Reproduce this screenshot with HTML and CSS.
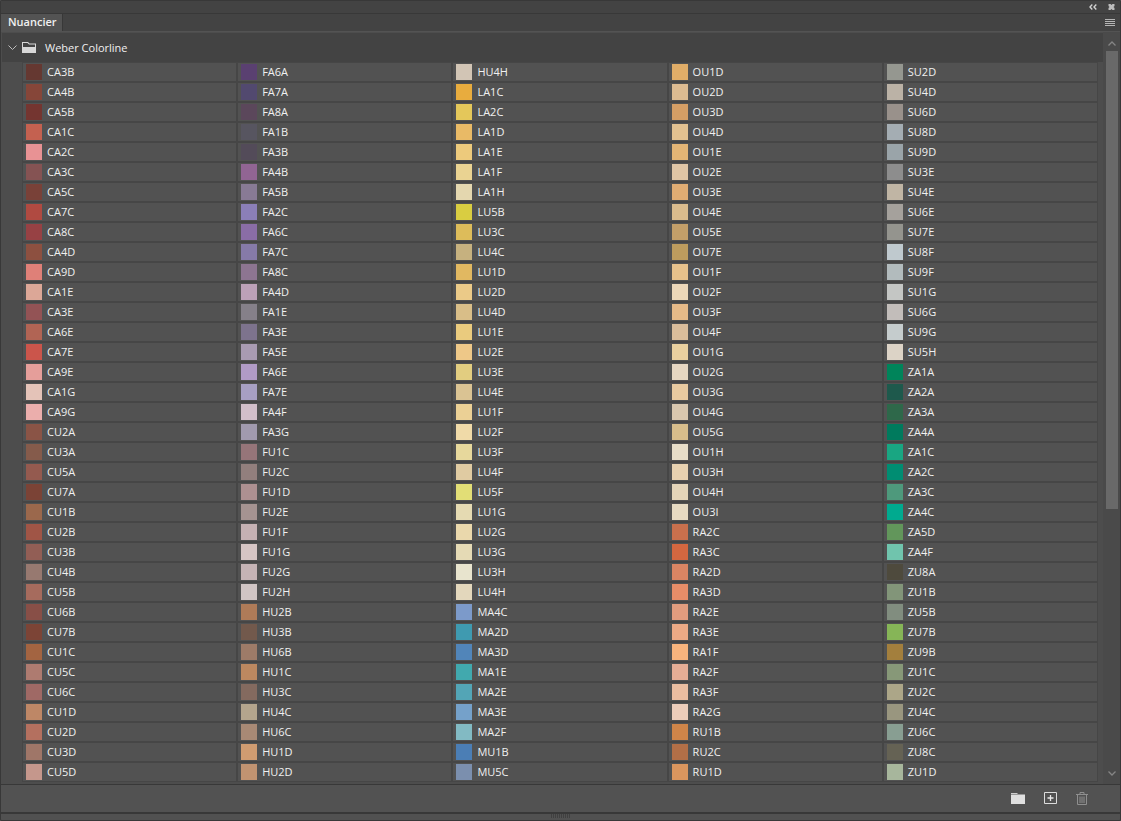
FILE: index.html
```html
<!DOCTYPE html>
<html lang="fr">
<head>
    <meta charset="UTF-8">
    <meta name="viewport" content="width=device-width, initial-scale=1.0">
    <title>Nuancier</title>
    <link rel="stylesheet" href="styles.css">
</head>
<body>
    <div class="panel">
        <header class="titlebar">
            <button class="icon-btn" aria-label="Réduire">
                <svg width="8" height="6" viewBox="0 0 8 6"><path d="M3.300 .5L1 3l2.300 2.500M7.300 .5L5 3l2.300 2.500" fill="none" stroke="#d0d0d0" stroke-width="1.400"/></svg>
            </button>
            <button class="icon-btn" aria-label="Fermer">
                <svg width="7" height="6" viewBox="0 0 7 6"><path d="M.5 0h2l1 1 1-1h2v2l-1 1 1 1v2h-2l-1-1-1 1h-2V4l1-1-1-1z" fill="#bdbdbd"/></svg>
            </button>
        </header>

        <nav class="tabs">
            <button class="tab">Nuancier</button>
            <button class="icon-btn" aria-label="Menu">
                <svg width="10" height="7" viewBox="0 0 10 7"><path d="M0 .5h10M0 2.500h10M0 4.500h10M0 6.500h10" stroke="#b4b4b4"/></svg>
            </button>
        </nav>

        <div class="content">
            <main class="library">
                <div class="group">
                    <svg class="chevron" width="9" height="6" viewBox="0 0 9 6"><path d="M.5 .5l4 4 4-4" fill="none" stroke="#bdbdbd"/></svg>
                    <svg class="folder" width="14" height="11" viewBox="0 0 14 11"><path d="M0 0h6l1.500 1.500H14V11H0z" fill="#d8d8d8"/><path d="M1 1h4.500l1.500 1.500h6V5H1z" fill="#434343"/></svg>
                    <span>Weber Colorline</span>
                </div>
                <ul id="swatches" class="swatches"></ul>
            </main>
            <div class="scrollbar">
                <svg width="8" height="5" viewBox="0 0 8 5"><path d="M.5 4.500L4 1l3.500 3.500" fill="none" stroke="#858585" stroke-width="1.300"/></svg>
                <div class="track"><div class="thumb"></div></div>
                <svg width="8" height="5" viewBox="0 0 8 5"><path d="M.5 .5L4 4 7.500 .5" fill="none" stroke="#858585" stroke-width="1.300"/></svg>
            </div>
        </div>

        <footer class="toolbar">
            <button class="icon-btn" aria-label="Nouveau groupe">
                <svg width="14" height="11" viewBox="0 0 14 11"><path d="M0 0h6l1 1H0z" fill="#cfcfcf"/><path d="M0 1.500h14V11H0z" fill="#e0e0e0"/></svg>
            </button>
            <button class="icon-btn" aria-label="Nouvelle nuance">
                <svg width="13" height="12" viewBox="0 0 13 12"><path d="M.5 .5h12v11H.5z" fill="none" stroke="#dcdcdc"/><path d="M6.500 3v6M3.500 6h6" stroke="#e8e8e8" stroke-width="1.300"/></svg>
            </button>
            <button class="icon-btn" aria-label="Supprimer">
                <svg width="12" height="13" viewBox="0 0 12 13"><path d="M4 2V.5h4V2M0 2.500h12M1.500 2.500v10h9v-10M4 4.500v6.500M6 4.500v6.500M8 4.500v6.500" fill="none" stroke="#8f8f8f"/></svg>
            </button>
        </footer>
        <div class="grip"><span></span></div>
    </div>
    <script src="script.js"></script>
</body>
</html>
```
FILE: styles.css
```css
:root {
    --panel: #4d4d4d;
    --cell: #525252;
    --dark: #434343;
    --line: #383838;
    --text: #f0f0f0;
}
* {
    box-sizing: border-box;
}
body {
    margin: 0;
    background-color: var(--panel);
    color: var(--text);
    font: 11px/18px 'Open Sans', 'Noto Sans', sans-serif;
}
button {
    font: inherit;
    color: inherit;
    background: none;
    border: none;
    padding: 0;
    margin: 0;
}
svg {
    display: block;
}
.panel {
    display: flex;
    flex-direction: column;
    min-height: 100vh;
    border: 1px solid var(--line);
    border-radius: 2px;
    overflow: hidden;
}
.titlebar {
    display: flex;
    justify-content: flex-end;
    align-items: center;
    gap: 11px;
    height: 13px;
    padding-right: 5px;
    background-color: var(--dark);
    border-bottom: 1px solid var(--line);
}
.tabs {
    display: flex;
    justify-content: space-between;
    align-items: center;
    height: 17px;
    padding-right: 5px;
    background-color: var(--dark);
}
.tab {
    height: 17px;
    line-height: 15px;
    padding: 0 5px 2px 7px;
    background-color: #535353;
    border-right: 1px solid var(--line);
    font-weight: 600;
}
.content {
    display: flex;
    flex: 1;
    border-top: 1px solid #535353;
    border-bottom: 1px solid var(--line);
}
.library {
    flex: 1;
    padding: 1px 0 2px 1px;
}
.group {
    display: flex;
    align-items: center;
    height: 29px;
    padding-left: 6px;
    background-color: var(--dark);
}
.chevron {
    margin-right: 5px;
}
.folder {
    margin-right: 9px;
}
.swatches {
    display: grid;
    grid-auto-flow: column;
    grid-template-rows: repeat(36, 18px);
    grid-auto-columns: 1fr;
    gap: 2px;
    list-style: none;
    margin: 0 5px 0 20px;
    padding: 1px;
    background-color: #464646;
}
.swatch {
    display: flex;
    align-items: center;
    gap: 5px;
    width: 100%;
    height: 18px;
    padding-left: 3px;
    background-color: var(--cell);
}
.swatch i {
    width: 16px;
    height: 16px;
}
.scrollbar {
    display: flex;
    flex-direction: column;
    align-items: center;
    gap: 5px;
    width: 17px;
    padding: 9px 0 8px;
    background-color: #4a4a4a;
}
.track {
    flex: 1;
    width: 12px;
}
.thumb {
    height: 64%;
    background-color: #696969;
}
.toolbar {
    display: flex;
    justify-content: flex-end;
    align-items: center;
    gap: 19px;
    height: 29px;
    padding: 0 32px 1px 0;
    background-color: var(--cell);
    border-bottom: 2px solid var(--line);
}
.grip {
    display: flex;
    justify-content: center;
    height: 6px;
    background-color: #515151;
}
.grip span {
    width: 20px;
    height: 4px;
    background: repeating-linear-gradient(90deg, #404040 0 1px, transparent 1px 2px);
}
```
FILE: script.js
```js
const colors = `
CA3B 653831, CA4B 864639, CA5B 743530, CA1C c46150, CA2C e89294, CA3C 855353, CA5C 794138, CA7C b04a41, CA8C 974144,
CA4D 8d5040, CA9D df8078, CA1E dca797, CA3E 935355, CA6E b16454, CA7E cb554b, CA9E e59e9a, CA1G e4c3b8, CA9G ebaeac,
CU2A 8a5446, CU3A 855b4b, CU5A 945a4f, CU7A 7b4336, CU1B 9b684c, CU2B a05546, CU3B 925e55, CU4B 977970, CU5B a66b5d,
CU6B 884f47, CU7B 7c4436, CU1C a36441, CU5C ae7b70, CU6C 9f6965, CU1D be8766, CU2D b4705f, CU3D 9f7668, CU5D c5978c,
FA6A 5a4071, FA7A 52496f, FA8A 5b475b, FA1B 575560, FA3B 534b59, FA4B 916593, FA5B 887a95, FA2C 8b7fb8, FA6C 8a6da6,
FA7C 867aa8, FA8C 8d7591, FA4D bca1b8, FA1E 858089, FA3E 7d738d, FA5E a99bb2, FA6E b19bc6, FA7E a79fc3, FA4F d2bfca,
FA3G a19aae, FU1C 967579, FU2C 927f7d, FU1D ad9091, FU2E a59391, FU1F c5b1b3, FU1G d6c5c4, FU2G c5b3b5, FU2H d1c5c4,
HU2B af7b58, HU3B 72594c, HU6B 9d7b68, HU1C bc8860, HU3C 846a5f, HU4C b4a58d, HU6C a88975, HU1D d09c71, HU2D c19371,
HU4H d2c5b5, LA1C e8ac3e, LA2C e4c75a, LA1D e9ba66, LA1E edca7c, LA1F ead392, LA1H e4d7af, LU5B d9cd41, LU3C ddbc5a,
LU4C c6b17f, LU1D e1b861, LU2D ebca88, LU4D d9be88, LU1E eacb7e, LU2E eec888, LU3E e2cd80, LU4E dac393, LU1F ebd095,
LU2F f0daa8, LU3F e7d89c, LU4F e0cba2, LU5F e2de76, LU1G e5dab2, LU2G ead8ac, LU3G e5dab5, LU3H e8e4ce, LU4H e3d7bc,
MA4C 7c9aca, MA2D 3f9ab0, MA3D 5185b9, MA1E 41a9ae, MA2E 53a5b6, MA3E 75a1ca, MA2F 82bac3, MU1B 4b7eb5, MU5C 7b8fae,
OU1D e0ad68, OU2D dcbb91, OU3D d49e65, OU4D e2c190, OU1E e3b575, OU2E dfc5a5, OU3E dfac73, OU4E dbbc8d, OU5E c39f69,
OU7E bd9c5e, OU1F e6c18b, OU2F ecd7b8, OU3F e5ba88, OU4F dabd9b, OU1G e9d09f, OU2G e5d6c1, OU3G e8caa0, OU4G d9c7ae,
OU5G d7bd8b, OU1H e7ddc8, OU3H e7d1b0, OU4H e4d4b8, OU3I e6dac2, RA2C c9704d, RA3C d36740, RA2D db8563, RA3D e68d68,
RA2E e19c7e, RA3E eca985, RA1F f8b47d, RA2F e5ad95, RA3F eabda0, RA2G ecccb9, RU1B cf8549, RU2C b26f47, RU1D db965e,
SU2D 959790, SU4D bbb2a6, SU6D 99918b, SU8D a4adb3, SU9D 9aa4a9, SU3E 8d8d8d, SU4E c0b5a4, SU6E a5a19c, SU7E 94948e,
SU8F bfc9ce, SU9F b2bbbd, SU1G c4c6c4, SU6G c2bdba, SU9G c5cccd, SU5H dcd3c6, ZA1A 00845a, ZA2A 1e594c, ZA3A 2e684a,
ZA4A 007a5d, ZA1C 19a682, ZA2C 008d72, ZA3C 4e997c, ZA4C 00aa8f, ZA5D 62965b, ZA4F 70c4ad, ZU8A 4e4a3d, ZU1B 829579,
ZU5B 818d7f, ZU7B 86b557, ZU9B a37f3d, ZU1C 879878, ZU2C aca688, ZU4C 99967f, ZU6C 889e92, ZU8C 656254, ZU1D a7b69c`;

const list = document.getElementById('swatches');

colors.trim().split(',').forEach(item => {
    const [name, hex] = item.trim().split(' ');
    const li = document.createElement('li');
    li.innerHTML = `<button class="swatch"><i style="background-color: #${hex}"></i>${name}</button>`;
    list.appendChild(li);
});
```
